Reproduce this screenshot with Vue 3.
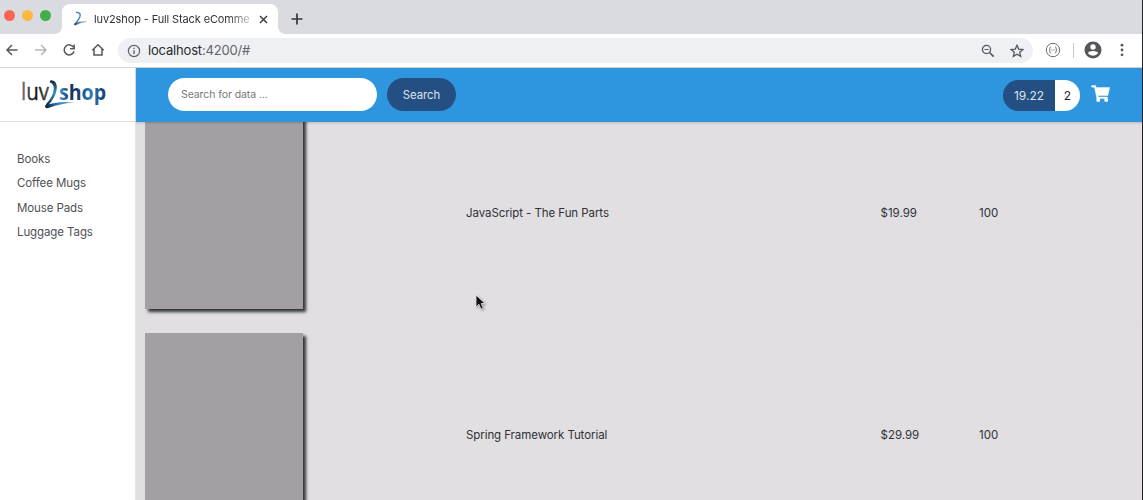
<script setup>
const categories = ['Books', 'Coffee Mugs', 'Mouse Pads', 'Luggage Tags']
const products = [
  { name: 'JavaScript - The Fun Parts', price: '$19.99', stock: 100 },
  { name: 'Spring Framework Tutorial', price: '$29.99', stock: 100 },
]
</script>

<template>
  <div class="window">
    <div class="tabstrip">
      <div class="lights"><i class="red"></i><i class="amber"></i><i class="green"></i></div>
      <div class="tab">
        <svg class="fav" width="15" height="16" viewBox="0 0 15 16">
          <defs>
            <linearGradient id="fg" x1="0" y1="0" x2="1" y2="0">
              <stop offset="0" stop-color="#173a63" /><stop offset="1" stop-color="#9cc9ea" />
            </linearGradient>
          </defs>
          <path d="M3 1.2Q8.5 1.5 6.8 6Q5.300 9.500 2 13" fill="none" stroke="#4a86b8" stroke-width="1.500" />
          <path d="M1 13Q6 10.300 13.500 10.600Q7 11.500 2 14.200Z" fill="url(#fg)" stroke="url(#fg)" stroke-width=".5" />
        </svg>
        <span class="tab-title">luv2shop - Full Stack eComme</span>
        <svg class="close" width="9" height="9" viewBox="0 0 9 9"><path d="M1 1L8 8M8 1L1 8" stroke="#3c4043" stroke-width="1.500" /></svg>
      </div>
      <svg class="plus" width="12" height="12" viewBox="0 0 12 12"><path d="M6 .5V11.500M.5 6H11.500" stroke="#35363a" stroke-width="1.700" /></svg>
    </div>
    <div class="toolbar">
      <svg class="nav" width="110" height="18" viewBox="0 0 110 18" fill="none" stroke="#54585d" stroke-width="1.500">
        <path d="M17.500 9H7M12 4L7 9L12 14" />
        <path d="M35 9H46M41 4L46 9L41 14" stroke="#b5b7bb" />
        <path d="M73.400 6.200A5 5 0 1 0 74 10.200M74.200 3.500V7.700H70" />
        <path d="M92.300 9.200L98 3.700L103.700 9.200M94 8V14H102V8" />
      </svg>
      <div class="address">
        <svg width="14" height="14" viewBox="0 0 14 14"><circle cx="7" cy="7" r="5.600" fill="none" stroke="#5f6368" stroke-width="1.200" /><path d="M7 6.200V10M7 3.700V5" stroke="#5f6368" stroke-width="1.400" /></svg>
        <span class="url">localhost<em>:4200/#</em></span>
        <svg class="zoom" width="14" height="14" viewBox="0 0 14 14" fill="none" stroke="#54585d"><circle cx="5.500" cy="5.500" r="4.100" stroke-width="1.300" /><path d="M3.500 5.500H7.500" /><path d="M8.500 8.500L12.700 12.700" stroke-width="1.700" /></svg>
        <svg class="star" width="14" height="14" viewBox="0 0 14 14"><path d="M7 1.300L8.700 5.100L12.900 5.500L9.700 8.300L10.700 12.400L7 10.200L3.300 12.400L4.300 8.300L1.100 5.500L5.300 5.100Z" fill="none" stroke="#54585d" stroke-width="1.300" /></svg>
      </div>
      <svg class="ext" width="16" height="16" viewBox="0 0 16 16" fill="none" stroke="#6a6d71"><circle cx="8" cy="8" r="6.700" /><path d="M5.800 5Q4.700 5 4.900 6.500Q5 8 4 8Q5 8 4.900 9.500Q4.700 11 5.800 11M10.200 5Q11.300 5 11.100 6.500Q11 8 12 8Q11 8 11.100 9.500Q11.300 11 10.200 11M6.500 8H7.500M8.500 8H9.500" /></svg>
      <span class="sep"></span>
      <svg class="user" width="18" height="18" viewBox="0 0 18 18"><circle cx="9" cy="9" r="8.500" fill="#54565b" /><circle cx="9" cy="6" r="2.700" fill="#fff" /><path d="M3.800 12Q5 9.900 9 9.900Q13 9.900 14.200 12Q12.300 14.800 9 14.800Q5.700 14.800 3.800 12Z" fill="#fff" /></svg>
      <svg class="dots" width="4" height="14" viewBox="0 0 4 14" fill="#54585d"><circle cx="2" cy="2.200" r="1.400" /><circle cx="2" cy="7" r="1.400" /><circle cx="2" cy="11.800" r="1.400" /></svg>
    </div>

    <div class="page">
      <aside class="sidebar">
        <div class="brand">
          <svg class="logo" width="90" height="36" viewBox="0 0 90 36">
            <defs>
              <linearGradient id="luv" x1="0" y1="0" x2="1" y2="0"><stop offset="0" stop-color="#777" /><stop offset=".5" stop-color="#111" /><stop offset="1" stop-color="#555" /></linearGradient>
              <linearGradient id="shop" x1="0" y1="0" x2="1" y2="0"><stop offset="0" stop-color="#4b9fd6" /><stop offset=".22" stop-color="#12365f" /><stop offset=".45" stop-color="#173f70" /><stop offset=".65" stop-color="#2f7eb8" /><stop offset="1" stop-color="#163c6c" /></linearGradient>
              <linearGradient id="arc" x1="0" y1="0" x2="0" y2="1"><stop offset="0" stop-color="#10243f" /><stop offset=".5" stop-color="#3d91cc" /><stop offset="1" stop-color="#0c1c35" /></linearGradient>
              <linearGradient id="sweep" x1="0" y1="0" x2="1" y2="0"><stop offset="0" stop-color="#0b1a31" /><stop offset=".4" stop-color="#2b76b1" /><stop offset="1" stop-color="#8bc7ed" /></linearGradient>
            </defs>
            <text class="luv" x="1" y="22" textLength="28" lengthAdjust="spacingAndGlyphs" fill="url(#luv)">luv</text>
            <path d="M31.500 2.200Q37.500 3 36.700 11Q36 19 27.500 28Q25 28.500 26.500 25.500Q33.500 18 33.800 10.500Q33.800 5.500 29.600 4.200Q29.600 2 31.500 2.200Z" fill="url(#arc)" />
            <path d="M25 27.500Q38 22.500 56 24.500Q41 25 28.500 30Q25 31 25 27.500Z" fill="url(#sweep)" />
            <text class="shop" x="39" y="22" textLength="47" lengthAdjust="spacingAndGlyphs" fill="url(#shop)">shop</text>
          </svg>
        </div>
        <nav class="menu"><a v-for="c in categories" :key="c">{{ c }}</a></nav>
      </aside>
      <main class="main">
        <header class="header">
          <div class="search">Search for data ...</div>
          <div class="button">Search</div>
          <div class="cart"><span class="total">19.22</span><span class="count">2</span></div>
          <svg class="trolley" width="20" height="18" viewBox="0 0 20 18" fill="#fff"><path d="M.5 1.200Q.5.500 1.200.500H4.700L5.200 2.500H18.700L16.900 10.500H7L7.300 12H16.500L16.200 13.600H5.800L3.500 2.200H1.200Q.5 2.200.5 1.500Z" stroke="#fff" stroke-width=".4" /><circle cx="7.200" cy="15" r="2" /><circle cx="15.200" cy="15" r="2" /></svg>
        </header>
        <section class="products">
          <div class="rows">
            <article v-for="p in products" :key="p.name" class="row">
              <div class="thumb"></div>
              <span class="name">{{ p.name }}</span>
              <span class="price">{{ p.price }}</span>
              <span class="stock">{{ p.stock }}</span>
            </article>
          </div>
        </section>
      </main>
    </div>
    <svg class="pointer" width="12" height="18" viewBox="0 0 12 18"><path d="M1 1V13L3.900 10.300L6 15.200L8.300 14.200L6.200 9.500H10Z" fill="#111" stroke="#eee" stroke-width=".8" /></svg>
    <div class="edge"></div>
  </div>
</template>

<style>
body { overflow: hidden; }
</style>
<style scoped>
* { box-sizing: border-box; }
svg { display: block; flex: none; }
.window { position: relative; width: 1143px; height: 500px; overflow: hidden; background: #fff; font-family: Inter, "Liberation Sans", sans-serif; font-size: 12px; color: #303236; display: flex; flex-direction: column; }
.tabstrip { height: 34px; flex: none; background: #dadbe1; display: flex; }
.lights { width: 62px; display: flex; gap: 7px; padding: 10px 0 0 3.500px; flex: none; }
.lights i { width: 11px; height: 11px; border-radius: 50%; }
.red { background: #fc6553; }
.amber { background: #fdb83d; }
.green { background: #43ad49; }
.tab { position: relative; width: 216px; height: 30px; margin-top: 4px; background: #fff; border-radius: 8px 8px 0 0; display: flex; align-items: center; padding: 0 10px 0 11px; flex: none; }
.tab::before, .tab::after { content: ""; position: absolute; bottom: 0; width: 7px; height: 7px; }
.tab::before { left: -7px; background: radial-gradient(circle at 0 0, transparent 6.500px, #fff 7px); }
.tab::after { right: -7px; background: radial-gradient(circle at 100% 0, transparent 6.500px, #fff 7px); }
.tab-title { width: 157px; margin-left: 6px; font-size: 11px; letter-spacing: -.12px; white-space: nowrap; -webkit-mask-image: linear-gradient(90deg, #000 85%, rgba(0,0,0,.25)); }
.close { margin-left: auto; }
.plus { margin: 13px 0 0 13px; }
.toolbar { height: 33px; flex: none; display: flex; align-items: center; background: #fff; }
.toolbar > svg { margin-top: -1px; }
.address { width: 915px; height: 25px; margin-left: 8px; padding: 0 9px; border-radius: 13px; background: #eff0f4; display: flex; align-items: center; flex: none; }
.url { margin: -1px 0 0 7px; font-size: 13px; letter-spacing: -.18px; color: #292b2f; }
.url em { font-style: normal; color: #5f6368; }
.zoom { margin-left: auto; }
.star { margin: 0 0 0 15px; }
.ext { margin-left: 12px; }
.sep { width: 1px; height: 15px; margin-left: 12px; background: #c8c9cc; }
.user { margin-left: 10px; }
.dots { margin-left: 18px; }
.page { flex: 1; min-height: 0; display: flex; border-top: 1px solid #d0d4da; }
.sidebar { width: 136px; flex: none; border-right: 1px solid #e5e5e7; }
.brand { height: 54px; padding: 10px 0 0 20px; border-bottom: 1px solid #dedee0; }
.logo { overflow: visible; }
.luv { font: 23px "Open Sans", sans-serif; stroke: url(#luv); stroke-width: .35px; }
.shop { font: bold 21.500px "Open Sans", sans-serif; }
.menu { padding: 25px 17px; display: flex; flex-direction: column; color: #505154; }
.menu a { line-height: 24.300px; font-size: 11.500px; letter-spacing: -.1px; }
.main { flex: 1; display: flex; flex-direction: column; min-width: 0; }
.header { position: relative; z-index: 1; height: 54px; flex: none; display: flex; align-items: center; padding-left: 32px; background: #2e96de; box-shadow: 0 1px 2px rgba(0,0,0,.18); }
.search { width: 209px; height: 33px; margin-top: -1px; border-radius: 17px; background: #fff; color: #77787a; font-size: 10.500px; letter-spacing: -.08px; line-height: 34px; padding-left: 13px; }
.button { width: 69px; height: 33px; margin: -1px 0 0 10px; border-radius: 17px; background: #244f82; color: #dce5ee; font-size: 11.300px; line-height: 35px; text-align: center; }
.cart { display: flex; width: 77px; height: 31px; line-height: 31px; margin: 0 0 0 547px; border-radius: 16px; overflow: hidden; }
.total { width: 52px; background: #244f82; color: #dce5ee; text-align: center; }
.count { width: 25px; background: #fff; color: #222; text-align: center; }
.trolley { margin: -3px 0 0 11px; }
.products { flex: 1; min-height: 0; overflow: hidden; background: #e1dfe2; }
.rows { margin-top: -20px; }
.row { height: 222px; display: grid; grid-template-columns: 321px 414.500px 98.500px 1fr; align-items: center; padding-left: 9px; border-bottom: 1px solid #dddcdf; color: #303236; font-size: 11.500px; letter-spacing: -.08px; }
.thumb { width: 158px; height: 198px; margin-top: -5px; background: #a2a0a3; box-shadow: 3px 3px 3px #303334; }
.price, .stock { letter-spacing: 0; }
.pointer { position: absolute; left: 475px; top: 294px; filter: drop-shadow(1px 1px 1px rgba(0,0,0,.35)); }
.edge { position: absolute; right: 0; top: 0; width: 1px; height: 500px; background: #202124; z-index: 2; }
</style>
